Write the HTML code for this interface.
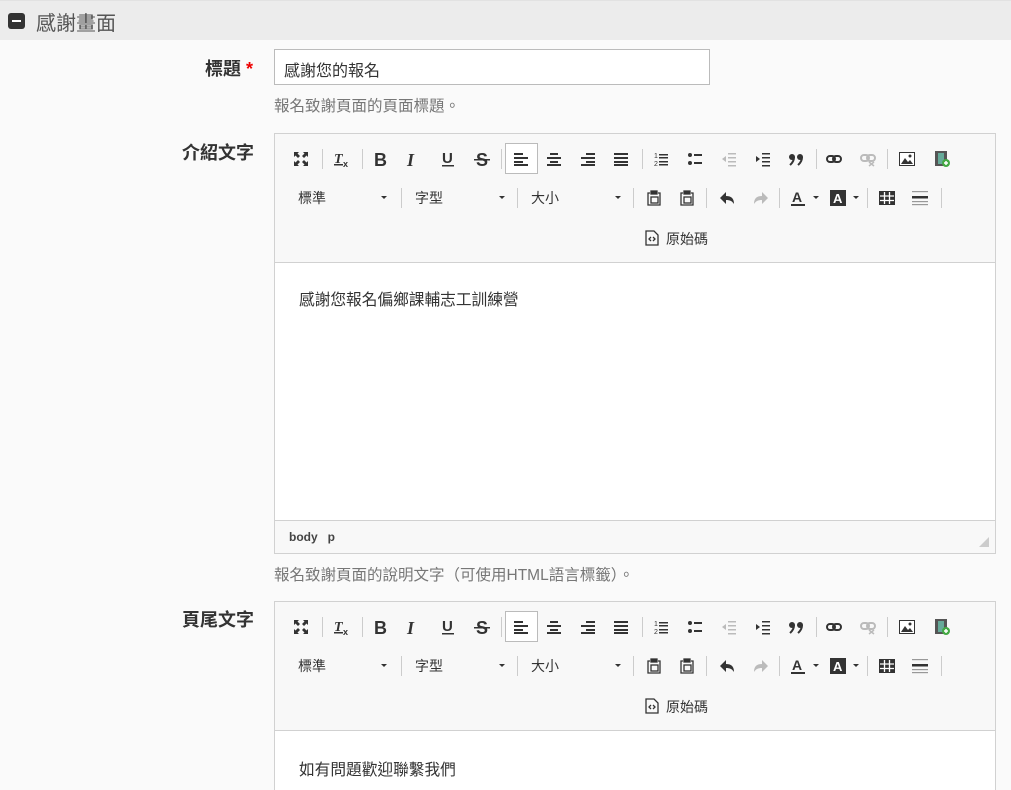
<!DOCTYPE html>
<html><head><meta charset="utf-8"><style>
*{box-sizing:border-box;margin:0;padding:0}
html,body{width:1011px;height:790px;overflow:hidden}
body{background:#fafafa;font-family:"Liberation Sans","Noto Sans CJK TC",sans-serif;color:#333;position:relative}
.hdr{position:absolute;left:0;top:0;width:1011px;height:40px;background:#ececec;border-top:1px solid #e2e2e2}
.hdr .ic{position:absolute;left:8px;top:12px;width:17px;height:16px;background:#333;border-radius:3px}
.hdr .ic:after{content:"";position:absolute;left:4px;top:7px;width:9px;height:2px;background:#fff}
.hdr .t{position:absolute;left:36px;top:6px;font-size:20px;color:#555}
.lbl{position:absolute;font-size:18px;font-weight:bold;color:#333;text-align:right;width:140px}
.req{color:#e00}
.inp{position:absolute;left:274px;top:49px;width:436px;height:36px;border:1px solid #bbb;background:#fff;font-size:16px;padding:7px 9px}
.help{position:absolute;left:274px;font-size:15.5px;color:#777}
.ed{position:absolute;left:274px;width:722px;border:1px solid #d1d1d1;background:#fff;overflow:hidden}
.tb{position:relative;height:129px;background:#f8f8f8;border-bottom:1px solid #d1d1d1}
.tb>*{position:absolute}
.i{width:16px;height:16px;top:17px}
.r2{top:56px}
.s{width:1px;height:20px;background:#ccc;top:15px}
.s.r2b{top:54px}
.dd{font-size:14px;top:54px;color:#333}
.ar{top:62px;width:0;height:0;border-left:3px solid transparent;border-right:3px solid transparent;border-top:3px solid #333}
.act{left:230px;top:9px;width:33px;height:31px;border:1px solid #bbb;background:#fff}
.body{padding:24px 24px;font-size:15.7px;color:#333}
.foot{height:33px;background:#f8f8f8;border-top:1px solid #d1d1d1;font-size:12px;font-weight:bold;padding:9px 14px;position:relative;color:#444}
.foot:after{content:"";position:absolute;right:6px;bottom:6px;border-left:10px solid transparent;border-bottom:10px solid #ccc}
</style></head><body>
<div class="hdr"><div class="ic"></div><div class="t">感謝畫面</div></div>
<div class="lbl" style="left:113px;top:55px">標題 <span class="req">*</span></div>
<div class="inp">感謝您的報名</div>
<div class="help" style="top:94px">報名致謝頁面的頁面標題。</div>
<div class="lbl" style="left:114px;top:139px">介紹文字</div>

<div class="ed" style="top:133px;height:421px">
<div class="tb" id="tb1">
<svg class="i" style="left:18px" viewBox="0 0 16 16" fill="#333"><path d="M1 1h5L4.5 2.5 7 5 5 7 2.5 4.5 1 6zM15 1v5l-1.5-1.5L11 7 9 5l2.5-2.5L10 1zM1 15v-5l1.5 1.5L5 9l2 2-2.5 2.5L6 15zM15 15h-5l1.5-1.5L9 11l2-2 2.5 2.5L15 10z"/></svg>
<div class="s" style="left:47px"></div>
<svg class="i" style="left:58px" viewBox="0 0 16 16"><text x="1" y="12" font-size="14" font-style="italic" font-weight="bold" fill="#333" font-family="Liberation Serif">T</text><rect x="1" y="13" width="9" height="1.5" fill="#333"/><text x="10" y="16" font-size="9" font-weight="bold" fill="#333">x</text></svg>
<div class="s" style="left:87px"></div>
<svg class="i" style="left:98px" viewBox="0 0 16 16"><text x="1" y="15" font-size="18" font-weight="bold" fill="#333">B</text></svg>
<svg class="i" style="left:130px" viewBox="0 0 16 16"><text x="2" y="15" font-size="18" font-weight="bold" font-style="italic" fill="#333" font-family="Liberation Serif">I</text></svg>
<svg class="i" style="left:165px" viewBox="0 0 16 16"><text x="2" y="12" font-size="15" font-weight="bold" fill="#333">U</text><rect x="2" y="14" width="12" height="1.5" fill="#333"/></svg>
<svg class="i" style="left:199px" viewBox="0 0 16 16"><text x="2" y="15" font-size="18" font-weight="bold" fill="#333">S</text><rect x="0" y="8" width="16" height="1.5" fill="#333"/></svg>
<div class="s" style="left:226px"></div>
<div class="act"></div>
<svg class="i" style="left:238px" viewBox="0 0 16 16" fill="#333"><rect x="1" y="2" width="9" height="2"/><rect x="1" y="6" width="14" height="2"/><rect x="1" y="10" width="9" height="2"/><rect x="1" y="13" width="14" height="2"/></svg>
<svg class="i" style="left:271px" viewBox="0 0 16 16" fill="#333"><rect x="4" y="2" width="8" height="2"/><rect x="1" y="6" width="14" height="2"/><rect x="4" y="10" width="8" height="2"/><rect x="1" y="13" width="14" height="2"/></svg>
<svg class="i" style="left:305px" viewBox="0 0 16 16" fill="#333"><rect x="6" y="2" width="9" height="2"/><rect x="1" y="6" width="14" height="2"/><rect x="6" y="10" width="9" height="2"/><rect x="1" y="13" width="14" height="2"/></svg>
<svg class="i" style="left:338px" viewBox="0 0 16 16" fill="#333"><rect x="1" y="2" width="14" height="2"/><rect x="1" y="6" width="14" height="2"/><rect x="1" y="10" width="14" height="2"/><rect x="1" y="13" width="14" height="2"/></svg>
<div class="s" style="left:367px"></div>
<svg class="i" style="left:378px" viewBox="0 0 16 16" fill="#333"><text x="1" y="7" font-size="7">1</text><text x="1" y="15" font-size="7">2</text><rect x="6" y="3" width="9" height="1.5"/><rect x="6" y="6" width="9" height="1.5"/><rect x="6" y="10" width="9" height="1.5"/><rect x="6" y="13" width="9" height="1.5"/></svg>
<svg class="i" style="left:412px" viewBox="0 0 16 16" fill="#333"><circle cx="3" cy="4" r="2"/><circle cx="3" cy="12" r="2"/><rect x="7" y="3" width="8" height="2"/><rect x="7" y="11" width="8" height="2"/></svg>
<svg class="i" style="left:446px" viewBox="0 0 16 16" fill="#bbb"><rect x="7" y="2" width="8" height="1.5"/><rect x="7" y="6" width="8" height="1.5"/><rect x="7" y="10" width="8" height="1.5"/><rect x="7" y="14" width="8" height="1.5"/><path d="M1 8l4-3v6z"/></svg>
<svg class="i" style="left:480px" viewBox="0 0 16 16" fill="#333"><rect x="7" y="2" width="8" height="1.5"/><rect x="7" y="6" width="8" height="1.5"/><rect x="7" y="10" width="8" height="1.5"/><rect x="7" y="14" width="8" height="1.5"/><path d="M5 8L1 5v6z"/></svg>
<svg class="i" style="left:513px" viewBox="0 0 16 16" fill="#333"><circle cx="4" cy="6" r="3"/><circle cx="12" cy="6" r="3"/><path d="M6 6c0 5-3 7-4 8M14 6c0 5-3 7-4 8" stroke="#333" stroke-width="2" fill="none"/></svg>
<div class="s" style="left:541px"></div>
<svg class="i" style="left:551px" viewBox="0 0 16 16" fill="none" stroke="#333" stroke-width="2"><rect x="1" y="5" width="8" height="6" rx="3"/><rect x="7" y="5" width="8" height="6" rx="3"/></svg>
<svg class="i" style="left:585px" viewBox="0 0 16 16" fill="none" stroke="#bbb" stroke-width="2"><rect x="1" y="4" width="8" height="6" rx="3"/><rect x="7" y="4" width="8" height="6" rx="3"/><path d="M9 11l5 4M14 11l-5 4" stroke-width="1.5"/></svg>
<div class="s" style="left:612px"></div>
<svg class="i" style="left:624px" viewBox="0 0 16 16"><rect x="0.5" y="1.5" width="15" height="13" fill="#fff" stroke="#333"/><path d="M2 13l4-6 3 4 2-2 3 4z" fill="#333"/><circle cx="11" cy="5" r="1.5" fill="#333"/></svg>
<svg class="i" style="left:659px" viewBox="0 0 16 16"><rect x="1" y="0" width="12" height="15" fill="#555"/><rect x="4" y="2" width="6" height="11" fill="#6a9"/><circle cx="12" cy="12" r="4" fill="#4a4"/><path d="M10 12h4M12 10v4" stroke="#fff" stroke-width="1.5"/></svg>

<div class="dd" style="left:23px">標準</div><div class="ar" style="left:106px"></div>
<div class="s r2b" style="left:126px"></div>
<div class="dd" style="left:140px">字型</div><div class="ar" style="left:224px"></div>
<div class="s r2b" style="left:242px"></div>
<div class="dd" style="left:256px">大小</div><div class="ar" style="left:340px"></div>
<div class="s r2b" style="left:358px"></div>
<svg class="i r2" style="left:371px" viewBox="0 0 16 16" fill="none" stroke="#333" stroke-width="1.3"><path d="M4 3H2v12h12V3h-2"/><rect x="5" y="1" width="6" height="3" fill="#333"/><rect x="5" y="7" width="7" height="6"/></svg>
<svg class="i r2" style="left:404px" viewBox="0 0 16 16" fill="none" stroke="#333" stroke-width="1.3"><path d="M4 3H2v12h12V3h-2"/><rect x="5" y="1" width="6" height="3" fill="#333"/><rect x="5" y="7" width="7" height="6"/></svg>
<div class="s r2b" style="left:431px"></div>
<svg class="i r2" style="left:444px" viewBox="0 0 16 16" fill="#333"><path d="M1 8l6-6v4c5 0 8 2 8 8-2-3-4-4-8-4v4z"/></svg>
<svg class="i r2" style="left:478px" viewBox="0 0 16 16" fill="#bbb"><path d="M15 8L9 2v4c-5 0-8 2-8 8 2-3 4-4 8-4v4z"/></svg>
<div class="s r2b" style="left:504px"></div>
<svg class="i r2" style="left:515px" viewBox="0 0 16 16"><text x="2" y="12" font-size="14" font-weight="bold" fill="#333">A</text><rect x="1" y="14" width="14" height="2" fill="#333"/></svg><div class="ar" style="left:538px"></div>
<svg class="i r2" style="left:555px" viewBox="0 0 16 16"><rect x="0" y="0" width="16" height="16" fill="#333"/><text x="3" y="13" font-size="13" font-weight="bold" fill="#fff">A</text></svg><div class="ar" style="left:578px"></div>
<div class="s r2b" style="left:592px"></div>
<svg class="i r2" style="left:604px" viewBox="0 0 16 16"><rect x="0" y="1" width="16" height="14" fill="#333"/><path d="M1 6h14M1 10.5h14M5.5 2v12M10.5 2v12" stroke="#fff" stroke-width="1.3"/></svg>
<svg class="i r2" style="left:637px" viewBox="0 0 16 16" fill="#333"><rect x="0" y="1" width="16" height="1.2" fill="#999"/><rect x="0" y="6" width="16" height="2.5"/><rect x="0" y="11" width="16" height="1.2" fill="#999"/><rect x="0" y="14" width="16" height="1.2" fill="#999"/></svg>
<div class="s r2b" style="left:666px"></div>
<svg class="i" style="left:369px;top:96px" viewBox="0 0 16 16" fill="none" stroke="#333" stroke-width="1.3"><path d="M2 1h8l4 4v10H2z"/><path d="M7 7l-2 2 2 2M9 7l2 2-2 2"/></svg>
<div class="dd" style="left:391px;top:95px">原始碼</div>
</div>
<div class="body" style="height:257px">感謝您報名偏鄉課輔志工訓練營</div>
<div class="foot">body &nbsp; p</div>
</div>
<div class="help" style="top:563px">報名致謝頁面的說明文字（可使用HTML語言標籤）。</div>

<div class="lbl" style="left:114px;top:606px">頁尾文字</div>
<div class="ed" style="top:601px;height:200px" id="ed2"></div>
<script>
var t=document.getElementById('tb1').outerHTML;
document.getElementById('ed2').innerHTML=t.replace('id="tb1"','')+'<div class="body" style="padding-top:26px">如有問題歡迎聯繫我們</div>';
</script>
</body></html>
